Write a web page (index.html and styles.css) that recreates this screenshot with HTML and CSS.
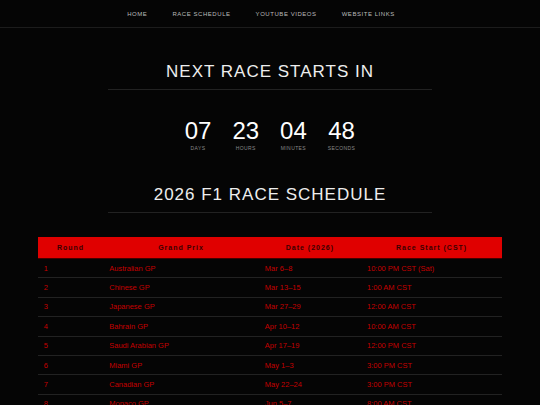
FILE: index.html
```html
<!DOCTYPE html>
<html lang="en">
  <head>
    <meta charset="UTF-8" />
    <meta name="viewport" content="width=device-width, initial-scale=1.0" />
    <link rel="stylesheet" href="styles.css">
    <title>F1 2026</title>
  </head>
  <body>
    <nav class="nav">
      <ul class="nav-list">
        <li><a href="#">Home</a></li>
        <li><a href="#schedule">Race Schedule</a></li>
        <li><a href="#">YouTube Videos</a></li>
        <li><a href="#">Website Links</a></li>
      </ul>
    </nav>

    <section class="countdown">
      <h2 class="title">Next Race Starts In</h2>
      <div class="timer">
        <div class="unit"><span class="num">07</span><span class="label">Days</span></div>
        <div class="unit"><span class="num">23</span><span class="label">Hours</span></div>
        <div class="unit"><span class="num">04</span><span class="label">Minutes</span></div>
        <div class="unit"><span class="num">48</span><span class="label">Seconds</span></div>
      </div>
    </section>

    <section class="schedule" id="schedule">
      <h2 class="title">2026 F1 Race Schedule</h2>
      <table class="races">
        <thead>
          <tr>
            <th class="c-round">Round</th>
            <th class="c-gp">Grand Prix</th>
            <th class="c-date">Date (2026)</th>
            <th class="c-start">Race Start (CST)</th>
          </tr>
        </thead>
        <tbody>
          <tr><td>1</td><td>Australian GP</td><td>Mar 6–8</td><td>10:00 PM CST (Sat)</td></tr>
          <tr><td>2</td><td>Chinese GP</td><td>Mar 13–15</td><td>1:00 AM CST</td></tr>
          <tr><td>3</td><td>Japanese GP</td><td>Mar 27–29</td><td>12:00 AM CST</td></tr>
          <tr><td>4</td><td>Bahrain GP</td><td>Apr 10–12</td><td>10:00 AM CST</td></tr>
          <tr><td>5</td><td>Saudi Arabian GP</td><td>Apr 17–19</td><td>12:00 PM CST</td></tr>
          <tr><td>6</td><td>Miami GP</td><td>May 1–3</td><td>3:00 PM CST</td></tr>
          <tr><td>7</td><td>Canadian GP</td><td>May 22–24</td><td>3:00 PM CST</td></tr>
          <tr><td>8</td><td>Monaco GP</td><td>Jun 5–7</td><td>8:00 AM CST</td></tr>
        </tbody>
      </table>
    </section>
  </body>
</html>
```

FILE: styles.css
```css
* {
  box-sizing: border-box;
}
body {
  margin: 0;
  background: #050505;
  color: #eee;
  font-family: "Liberation Sans", Arial, sans-serif;
}
.nav {
  height: 28px;
  border-bottom: 1px solid #1c1c1c;
}
.nav-list {
  list-style: none;
  margin: 0;
  padding: 0 18px 0 0;
  height: 27px;
  display: flex;
  justify-content: center;
  align-items: center;
  gap: 25px;
  font-size: 6px;
  line-height: 1;
}
.nav-list a {
  display: block;
  color: #bbb;
  text-decoration: none;
  text-transform: uppercase;
  letter-spacing: 0.55px;
}
.title {
  width: 60%;
  margin: 0 auto;
  padding-bottom: 7px;
  border-bottom: 1px solid #222;
  text-align: center;
  text-transform: uppercase;
  font-weight: normal;
  font-size: 17px;
  line-height: 20px;
  letter-spacing: 1px;
  color: #eee;
}
.countdown {
  padding-top: 34px;
}
.timer {
  display: flex;
  justify-content: center;
  gap: 21px;
  margin-top: 29px;
}
.unit {
  display: flex;
  flex-direction: column;
  align-items: center;
}
.num {
  font-size: 24px;
  line-height: 24px;
  color: #fff;
}
.label {
  margin-top: 2px;
  font-size: 5px;
  line-height: 6px;
  letter-spacing: 0.4px;
  text-transform: uppercase;
  color: #888;
}
.schedule {
  padding-top: 34px;
}
.races {
  width: 86%;
  margin: 24px auto 0;
  border-collapse: collapse;
  font-size: 7.5px;
}
.races th {
  background: #e00000;
  color: #3a0000;
  font-size: 7px;
  font-weight: bold;
  letter-spacing: 1px;
  line-height: 7px;
  padding: 7px 6px;
  text-align: center;
  border-bottom: 1px solid #400;
}
.c-round { width: 14.1%; }
.c-gp { width: 33.5%; }
.c-date { width: 22%; }
.c-start { width: 30.4%; }
.races td {
  color: #c40000;
  padding: 5.5px 6px;
  line-height: 7.4px;
  border-bottom: 1px solid #222;
  text-align: left;
}
```
